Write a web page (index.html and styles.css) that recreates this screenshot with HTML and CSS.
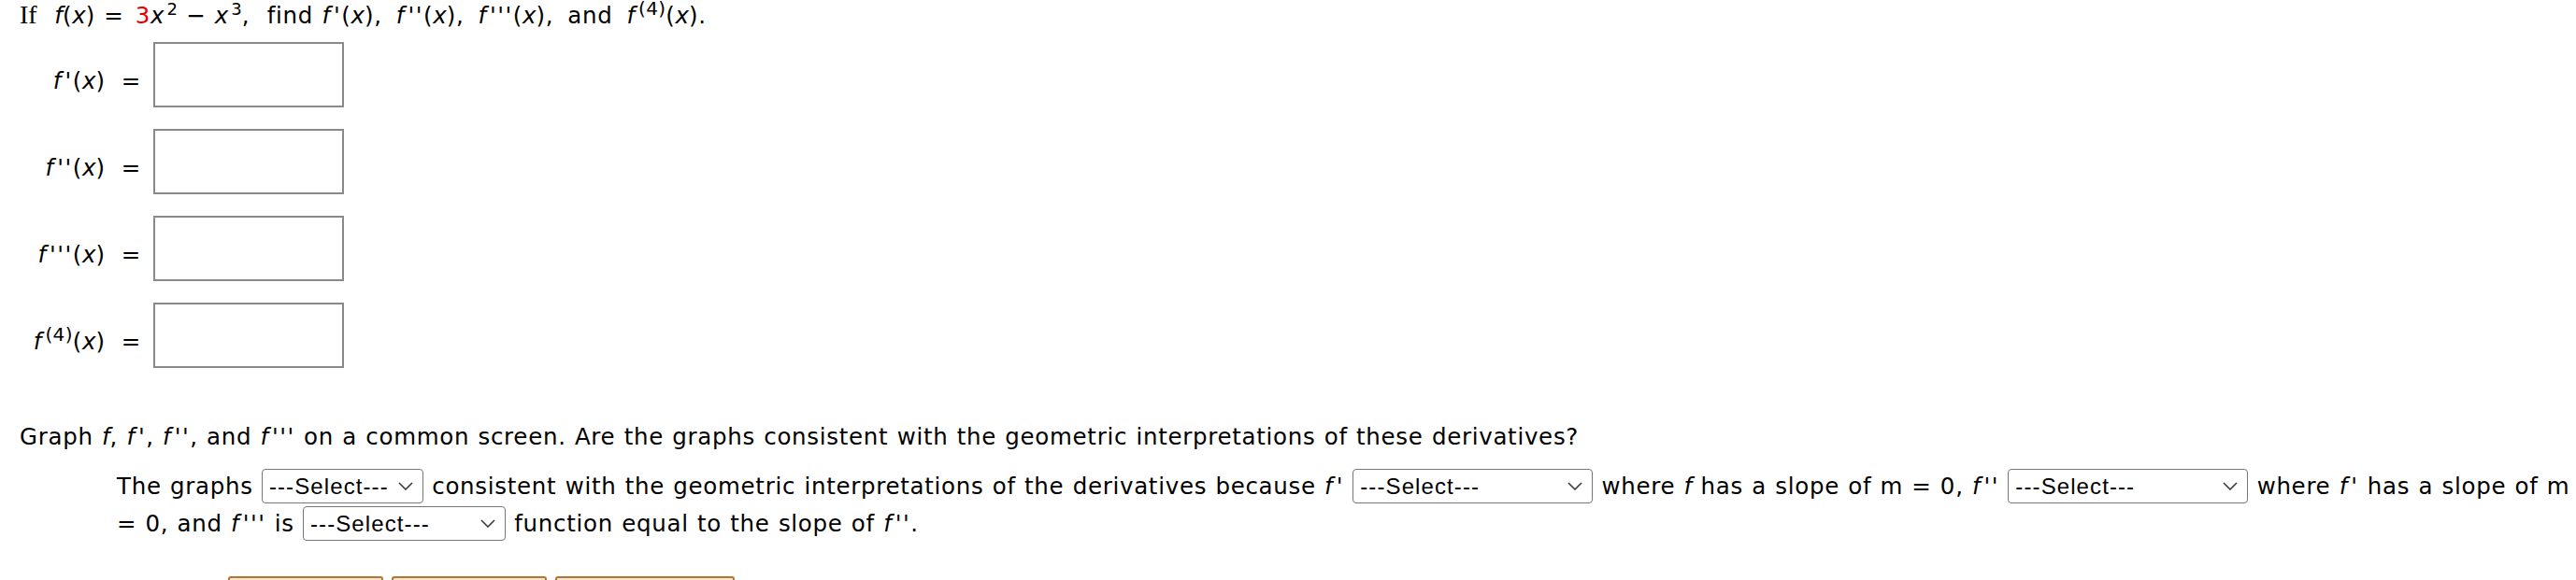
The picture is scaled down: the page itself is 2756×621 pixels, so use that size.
FILE: index.html
```html
<!DOCTYPE html>
<html lang="en">
<head>
<meta charset="utf-8">
<title>Derivatives question</title>
<link rel="stylesheet" href="styles.css">
</head>
<body>
<div class="page">
  <p class="prompt"><span class="serif">If</span>&nbsp; <i>f</i>(<i>x</i>) = <span class="red">3</span><i>x</i><sup>2</sup> − <i>x</i><sup>3</sup>,&nbsp; find <span class="ws"><i>f</i><i class="pr">'</i>(<i>x</i>), <i>f</i><i class="pr">''</i>(<i>x</i>), <i>f</i><i class="pr">'''</i>(<i>x</i>), and <i>f</i><sup class="ord">(4)</sup>(<i>x</i>).</span></p>

  <div class="answers">
    <div class="row">
      <span class="lbl"><i>f</i><i class="pr">'</i>(<i>x</i>)<span class="eq">=</span></span>
      <input class="ans" type="text" aria-label="f'(x)">
    </div>
    <div class="row">
      <span class="lbl"><i>f</i><i class="pr">''</i>(<i>x</i>)<span class="eq">=</span></span>
      <input class="ans" type="text" aria-label="f''(x)">
    </div>
    <div class="row">
      <span class="lbl"><i>f</i><i class="pr">'''</i>(<i>x</i>)<span class="eq">=</span></span>
      <input class="ans" type="text" aria-label="f'''(x)">
    </div>
    <div class="row">
      <span class="lbl"><i>f</i><sup class="ord">(4)</sup>(<i>x</i>)<span class="eq">=</span></span>
      <input class="ans" type="text" aria-label="f(4)(x)">
    </div>
  </div>

  <p class="graph">Graph <i>f</i>, <i>f</i><i class="pr">'</i>, <i>f</i><i class="pr">''</i>, and <i>f</i><i class="pr">'''</i> on a common screen. Are the graphs consistent with the geometric interpretations of these derivatives?</p>

  <p class="para">The graphs <span class="sel"><select class="s1"><option>---Select---</option><option>are</option><option>are not</option></select><svg class="chev" width="16" height="9" viewBox="0 0 16 9"><polyline points="1,1 8,8 15,1"/></svg></span> consistent with the geometric interpretations of the derivatives because <i>f</i><i class="pr">'</i> <span class="sel"><select class="s3"><option>---Select---</option><option>is zero</option><option>is positive</option><option>is negative</option></select><svg class="chev" width="16" height="9" viewBox="0 0 16 9"><polyline points="1,1 8,8 15,1"/></svg></span> where <i>f</i> has a slope of m = 0, <i>f</i><i class="pr">''</i> <span class="sel"><select class="s3"><option>---Select---</option><option>is zero</option><option>is positive</option><option>is negative</option></select><svg class="chev" width="16" height="9" viewBox="0 0 16 9"><polyline points="1,1 8,8 15,1"/></svg></span> where <i>f</i><i class="pr">'</i> has a slope of m<br>= 0, and <i>f</i><i class="pr">'''</i> is <span class="sel"><select class="s2"><option>---Select---</option><option>a constant</option><option>a linear</option><option>a quadratic</option></select><svg class="chev" width="16" height="9" viewBox="0 0 16 9"><polyline points="1,1 8,8 15,1"/></svg></span> function equal to the slope of <i>f</i><i class="pr">''</i>.</p>

  <div class="buttons">
    <button class="btn b1" type="button" aria-label="Submit Answer"></button>
    <button class="btn b2" type="button" aria-label="Save Progress"></button>
    <button class="btn b3" type="button" aria-label="Practice Another Version"></button>
  </div>
</div>
</body>
</html>
```

FILE: styles.css
```css
html, body {
  margin: 0;
  padding: 0;
  background: #ffffff;
}

body {
  font-family: "DejaVu Sans", Verdana, sans-serif;
  font-size: 24.5px;
  letter-spacing: 0.7px;
  word-spacing: 0.8px;
  color: #000;
  overflow: hidden;
  height: 621px;
}

.page {
  padding: 0 0 0 21px;
}

p {
  margin: 0;
}

i {
  font-style: italic;
  letter-spacing: 0;
}

.pr {
  margin-left: 4px;
  letter-spacing: 1.5px;
}

.serif {
  font-family: "Liberation Serif", "Times New Roman", serif;
  font-size: 28px;
  letter-spacing: 0;
}

.red {
  color: #e60000;
  margin-left: 3px;
}

sup {
  font-size: 18px;
  line-height: 0;
  vertical-align: 9px;
  letter-spacing: 0;
  margin-left: 3px;
}

sup.ord {
  font-size: 20px;
  margin-left: 4px;
  letter-spacing: 0.3px;
}

.prompt {
  line-height: 30px;
  padding-top: 1px;
  white-space: nowrap;
}

.ws {
  word-spacing: 6.5px;
}

.answers {
  display: flex;
  flex-direction: column;
  gap: 23px;
  margin-top: 13px;
}

.row {
  display: flex;
  align-items: flex-start;
}

.lbl {
  width: 130px;
  text-align: right;
  line-height: 30px;
  margin-top: 27px;
  margin-right: 13px;
  margin-left: -21px;
  padding-left: 21px;
  white-space: nowrap;
}

.eq {
  margin-left: 17px;
}

.ans {
  width: 204px;
  height: 70px;
  box-sizing: border-box;
  border: 2px solid #8a8a8a;
  border-radius: 0;
  background: #fff;
  margin: 0;
  padding: 0 6px;
  font: inherit;
  outline: none;
}

.graph {
  line-height: 30px;
  margin-top: 59px;
  white-space: nowrap;
}

.para {
  line-height: 40px;
  margin: 18px 0 0 104px;
  white-space: nowrap;
}

.sel {
  position: relative;
  display: inline-block;
  letter-spacing: 0;
  word-spacing: 0;
}

.sel select {
  -webkit-appearance: none;
  appearance: none;
  height: 37px;
  box-sizing: border-box;
  border: 1.75px solid #767676;
  border-radius: 4px;
  background: #fff;
  color: #000;
  font-family: "Liberation Sans", Arial, sans-serif;
  font-size: 24px;
  letter-spacing: 1.1px;
  padding: 0 30px 0 7px;
  margin: 0;
}

.sel .s1 { width: 173px; }
.sel .s2 { width: 217px; }
.sel .s3 { width: 257px; }

.chev {
  position: absolute;
  right: 11px;
  top: 15px;
  pointer-events: none;
}

.chev polyline {
  fill: none;
  stroke: #3b3b3b;
  stroke-width: 1.6;
}

.buttons {
  display: flex;
  gap: 9px;
  margin: 36px 0 0 223px;
}

.btn {
  height: 44px;
  box-sizing: border-box;
  border: 2px solid #b8742f;
  border-radius: 3px;
  background: linear-gradient(#f9dfbf, #efb778);
  box-shadow: inset 0 2px 0 #fbe8d0;
  padding: 0;
}

.b1 { width: 166px; }
.b2 { width: 166px; }
.b3 { width: 192px; }
```
